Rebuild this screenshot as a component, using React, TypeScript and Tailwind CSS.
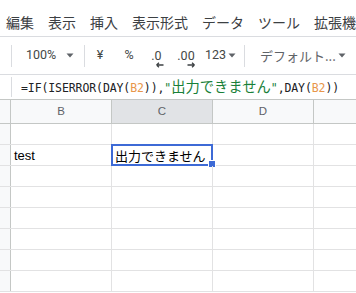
import React from "react";

const menus = ["編集", "表示", "挿入", "表示形式", "データ", "ツール", "拡張機能"];

const Caret = () => (
  <svg width="8" height="5" viewBox="0 0 8 5" className="shrink-0">
    <path d="M0.5 0.5 L7.5 0.5 L4 4.5 Z" fill="#5f6368" />
  </svg>
);

const Sep = () => <div className="w-px h-[22px] bg-[#dadce0] shrink-0" />;

const Arrow = ({ dir, left }: { dir: "left" | "right"; left: string }) => (
  <svg width="8" height="6" viewBox="0 0 8 6" className={`absolute top-[13px] ${left}`}>
    {dir === "left" ? (
      <path d="M0.5 3 L7.5 3 M0.5 3 L3 0.8 M0.5 3 L3 5.2" stroke="#3c4043" strokeWidth="1.3" fill="none" />
    ) : (
      <path d="M0.5 3 L7.5 3 M7.5 3 L5 0.8 M7.5 3 L5 5.2" stroke="#3c4043" strokeWidth="1.3" fill="none" />
    )}
  </svg>
);

const cols = ["B", "C", "D", ""];

export default function App() {
  const rows = Array.from({ length: 8 });

  return (
    <div className="w-[356px] h-[293px] overflow-hidden bg-white font-['Roboto','Noto_Sans_CJK_JP',sans-serif] text-[#3c4043]">
      {/* menu */}
      <div className="h-[37px] border-b border-[#dadce0] flex items-start pt-[12px] pl-[6px] gap-[14px] whitespace-nowrap overflow-hidden text-[14px] leading-[20px] font-['Noto_Sans_CJK_JP',sans-serif] text-[#3c4043]">
        {menus.map((m) => (
          <span key={m} className="shrink-0">{m}</span>
        ))}
      </div>

      {/* toolbar */}
      <div className="h-[38px] border-b border-[#dadce0] flex items-center whitespace-nowrap text-[12.5px] text-[#444746]">
        <div className="w-[11px] shrink-0" />
        <Sep />
        <div className="w-[72px] flex items-center shrink-0 pl-[14px]">
          <span>100%</span>
          <span className="ml-auto mr-[10px]">
            <Caret />
          </span>
        </div>
        <Sep />
        <div className="w-[30px] text-center shrink-0">¥</div>
        <div className="w-[28px] text-center shrink-0">%</div>
        <div className="w-[27px] flex justify-center shrink-0">
          <span className="relative leading-[14px]">
            .0
            <Arrow dir="left" left="left-[5px]" />
          </span>
        </div>
        <div className="w-[32px] flex justify-center shrink-0">
          <span className="relative leading-[14px]">
            .00
            <Arrow dir="right" left="left-[10px]" />
          </span>
        </div>
        <div className="w-[42px] flex items-center shrink-0 pl-[3px]">
          <span>123</span>
          <span className="ml-[2px]">
            <Caret />
          </span>
        </div>
        <Sep />
        <div className="flex items-center flex-1 pl-[15px] font-['Noto_Sans_CJK_JP',sans-serif] text-[13px] text-[#5f6368]">
          <span>デフォルト...</span>
          <span className="ml-auto mr-[10px]">
            <Caret />
          </span>
        </div>
      </div>

      {/* formula bar */}
      <div className="h-[25px] border-b border-[#c4c7c5] flex items-center whitespace-nowrap">
        <div className="w-[11px] shrink-0" />
        <div className="w-px h-[20px] bg-[#dadce0] shrink-0" />
        <div className="pl-[9px] font-['DejaVu_Sans_Mono','Noto_Sans_CJK_JP',monospace] text-[11.5px] tracking-[-0.1px] text-[#202124] leading-[20px]">
          =IF(ISERROR(DAY(<span className="text-[#e8964a]">B2</span>)),
          <span className="text-[#188038]">
            "<span className="font-['Noto_Sans_CJK_JP',sans-serif] text-[14.3px] tracking-normal">出力できません</span>"
          </span>
          ,DAY(<span className="text-[#e8964a]">B2</span>))
        </div>
      </div>

      {/* grid */}
      <div className="font-['Liberation_Sans','Noto_Sans_CJK_JP',sans-serif]">
        <div className="h-[24px] flex border-b border-[#c4c7c5] text-[11.5px] text-[#5f6368]">
          <div className="w-[11px] shrink-0 bg-[#f8f9fa] border-r border-[#c4c7c5]" />
          {cols.map((c, i) => (
            <div
              key={i}
              className={`${i < 3 ? "w-[101px] shrink-0 border-r border-[#c4c7c5]" : "flex-1"} flex items-center justify-center ${
                c === "C" ? "bg-[#e1e3e6]" : "bg-[#f8f9fa]"
              }`}
            >
              {c}
            </div>
          ))}
        </div>
        {rows.map((_, r) => (
          <div key={r} className="h-[21px] flex border-b border-[#e2e2e3] text-[13px] text-black">
            <div className="w-[11px] shrink-0 bg-[#f8f9fa] border-r border-[#c4c7c5]" />
            <div className="w-[101px] shrink-0 border-r border-[#e2e2e3] pl-[3px] flex items-center leading-none">
              {r === 1 ? "test" : ""}
            </div>
            <div className="relative w-[101px] shrink-0 border-r border-[#e2e2e3] pl-[3px] flex items-center leading-none whitespace-nowrap">
              {r === 1 && (
                <>
                  <span className="font-['Noto_Sans_CJK_JP',sans-serif] text-[13px]">出力できません</span>
                  <div className="absolute -left-[1px] -top-[1px] w-[102px] h-[22px] border-2 border-[#3d6ad6]" />
                  <div className="absolute left-[96px] top-[15px] w-[8px] h-[8px] bg-[#3d6ad6] border border-white" />
                </>
              )}
            </div>
            <div className="w-[101px] shrink-0 border-r border-[#e2e2e3]" />
            <div className="flex-1" />
          </div>
        ))}
      </div>
    </div>
  );
}
